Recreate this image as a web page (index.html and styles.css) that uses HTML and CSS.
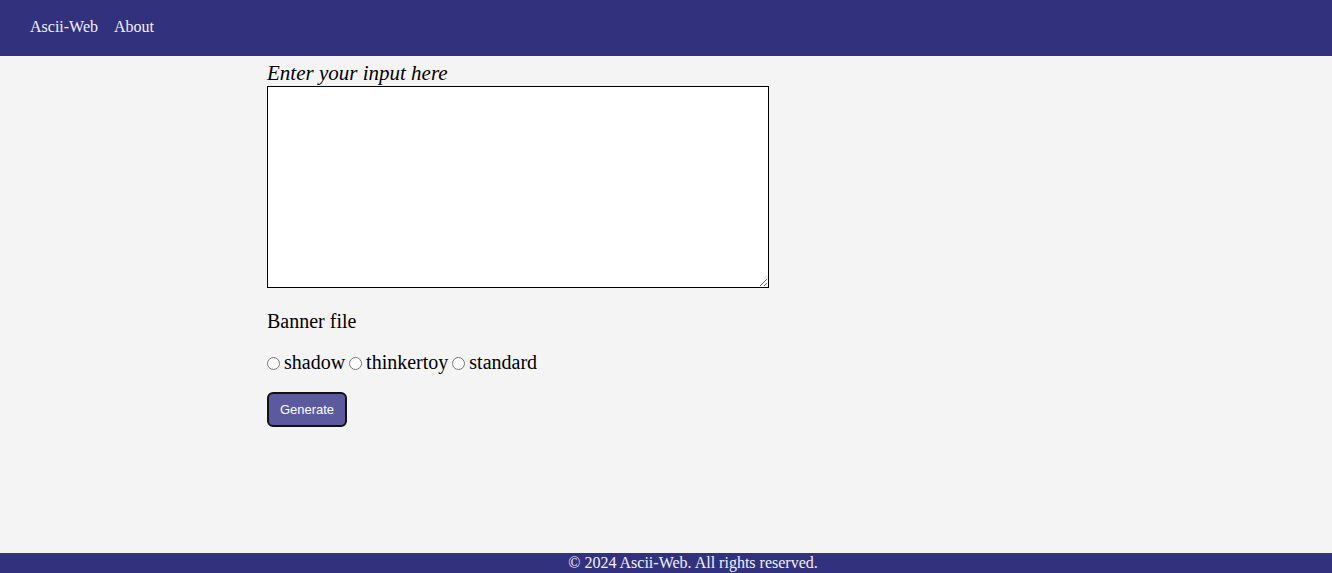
FILE: index.html
```html
<!DOCTYPE html>
<html>
<head>
<meta charset="utf-8">
<link rel="stylesheet" href="styles.css">
</head>
<body>
<nav class="nav">
  <a class="nav-link" href="#">Ascii-Web</a>
  <a class="nav-link" href="#">About</a>
</nav>
<main class="main">
  <form class="form">
    <label class="input-label" for="txt">Enter your input here</label>
    <textarea class="input" id="txt"></textarea>
    <p class="banner-title">Banner file</p>
    <div class="radios"><input class="radio" type="radio" name="b" id="r1"><label class="radio-label" for="r1">shadow</label><input class="radio" type="radio" name="b" id="r2"><label class="radio-label" for="r2">thinkertoy</label><input class="radio" type="radio" name="b" id="r3"><label class="radio-label" for="r3">standard</label></div>
    <button class="btn" type="button">Generate</button>
  </form>
</main>
<footer class="footer">© 2024 Ascii-Web. All rights reserved.</footer>
</body>
</html>
```

FILE: styles.css
```css
html, body {
  margin: 0;
  padding: 0;
}
body {
  background: #f4f4f4;
  font-family: "Liberation Serif", "Times New Roman", serif;
  color: #000;
  min-height: 100vh;
}
.nav {
  background: #32317e;
  height: 56px;
  display: flex;
  align-items: center;
  gap: 16px;
  padding: 0 30px;
  box-sizing: border-box;
}
.nav-link {
  color: #f2f2ff;
  text-decoration: none;
  font-size: 16px;
  position: relative;
  top: -1px;
}
.main {
  width: 798px;
  margin: 0 auto;
  padding-top: 5px;
}
.form {
  display: flex;
  flex-direction: column;
  align-items: flex-start;
}
.input-label {
  font-style: italic;
  font-size: 21px;
  line-height: 24px;
  margin-bottom: 1px;
  display: block;
}
.input {
  box-sizing: border-box;
  width: 502px;
  height: 202px;
  border: 1px solid #000;
  background: #fff;
  margin: 0;
  padding: 2px;
}
.banner-title {
  font-size: 20px;
  line-height: 23px;
  margin: 22px 0 0 0;
}
.radios {
  font-size: 20px;
  line-height: 23px;
  margin-top: 18px;
}
.radio {
  margin: 0 4px 0 0;
  width: 13px;
  height: 13px;
  vertical-align: -1px;
}
.radio-label {
  margin-right: 4px;
}
.btn {
  margin-top: 18px;
  width: 80px;
  height: 35px;
  background: #5c5a9e;
  color: #fff;
  border: 2px solid #111;
  border-radius: 6px;
  font-family: "Liberation Sans", Arial, sans-serif;
  font-size: 13px;
  padding: 0;
}
.footer {
  position: fixed;
  left: 0;
  right: 0;
  bottom: 0;
  height: 20px;
  box-sizing: border-box;
  padding-left: 54px;
  background: #32317e;
  color: #f2f2ff;
  text-align: center;
  font-size: 16px;
  line-height: 20px;
}
```
